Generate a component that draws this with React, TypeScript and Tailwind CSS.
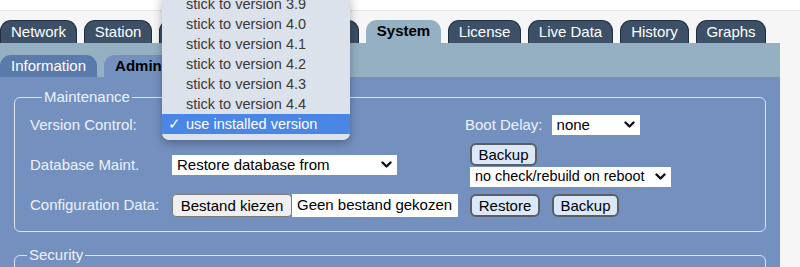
import React from 'react';

const mainTabs = [
  { label: 'Network', w: 'w-[77px]' },
  { label: 'Station', w: 'w-[68px]' },
  { label: 'Calibration', w: 'w-[97px]' },
  { label: 'Alarms', w: 'w-[96px]' },
  { label: 'System', w: 'w-[75px]', active: true },
  { label: 'License', w: 'w-[73px]' },
  { label: 'Live Data', w: 'w-[85px]' },
  { label: 'History', w: 'w-[69px]' },
  { label: 'Graphs', w: 'w-[70px]' },
];

const versions = ['3.9', '4.0', '4.1', '4.2', '4.3', '4.4'];

const Chevron = () => (
  <svg width="11" height="8" viewBox="0 0 11 8" className="shrink-0">
    <path d="M1.5 1.5 L5.5 5.5 L9.5 1.5" fill="none" stroke="#111" strokeWidth="2.4" strokeLinecap="round" strokeLinejoin="round" />
  </svg>
);

const Select = ({ text, className }: { text: string; className: string }) => (
  <div className={`flex items-center justify-between bg-white h-[20px] pl-[5px] pr-[5px] text-black ${className}`}>
    <span className="whitespace-nowrap">{text}</span>
    <Chevron />
  </div>
);

const Btn = ({ children, className = '' }: { children: React.ReactNode; className?: string }) => (
  <button className={`h-[23px] rounded-[6px] border-2 border-[#5a5f66] bg-[#dce8f8] text-black leading-none ${className}`}>
    {children}
  </button>
);

export default function App() {
  return (
    <div className="relative w-[800px] h-[267px] overflow-hidden bg-[#f6f6f6] text-[15px]" style={{ fontFamily: '"Liberation Sans", Arial, sans-serif' }}>
      <div className="h-[11px] bg-white border-b border-[#e3e3e3]" />
      <div className="w-[780px]">
        {/* main tabs */}
        <div className="flex gap-[7px] pt-[9px] items-end">
          {mainTabs.map((t) => (
            <div
              key={t.label}
              className={`${t.w} h-[23px] rounded-t-[11px] flex items-center justify-center whitespace-nowrap ${
                t.active
                  ? 'bg-[#94b0c2] text-black font-bold'
                  : 'bg-[#3c5067] text-white border border-b-0 border-[#22303f]'
              }`}
            >
              {t.label}
            </div>
          ))}
        </div>
        {/* sub tabs band */}
        <div className="h-[34px] bg-[#94b0c2] flex items-end gap-[7px]">
          <div className="w-[97px] h-[22px] rounded-t-[11px] bg-[#5a7aab] text-white flex items-center justify-center">
            Information
          </div>
          <div className="w-[128px] h-[22px] rounded-t-[11px] bg-[#7390bf] text-black font-bold flex items-center justify-center">
            Administration
          </div>
        </div>
        {/* panel */}
        <div className="bg-[#7390bf] h-[200px] pt-[11px] text-[#eef2f8]">
          <fieldset className="mx-[14px] border border-[#dbe3ef] rounded-[6px] pl-[15px] pt-[9px] pb-[14px]">
            <legend className="ml-[12px] px-[2px] leading-[18px]">Maintenance</legend>
            <div className="grid grid-cols-[142px_298px_1fr] items-center">
              <div className="h-[20px] leading-[20px]">Version Control:</div>
              <div />
              <div className="flex items-center -ml-[5px] h-[20px]">
                <span>Boot Delay:</span>
                <Select text="none" className="ml-[9px] w-[88px]" />
              </div>

              <div className="mt-[8px]">Database Maint.</div>
              <div className="mt-[8px]">
                <Select text="Restore database from" className="w-[225px]" />
              </div>
              <div className="mt-[8px] flex flex-col items-start gap-[1px]">
                <Btn className="w-[67px]">Backup</Btn>
                <Select text="no check/rebuild on reboot" className="w-[201px] text-[14.4px]" />
              </div>

              <div className="mt-[7px]">Configuration Data:</div>
              <div className="mt-[7px] flex items-center">
                <button className="h-[23px] w-[120px] rounded-[4px] border border-[#7a7a7a] bg-[#efefef] text-black">Bestand kiezen</button>
                <div className="h-[23px] w-[166px] bg-white text-black flex items-center pl-[5px] whitespace-nowrap">Geen bestand gekozen</div>
              </div>
              <div className="mt-[7px] flex gap-[12px]">
                <Btn className="w-[70px]">Restore</Btn>
                <Btn className="w-[67px]">Backup</Btn>
              </div>
            </div>
          </fieldset>
          <fieldset className="mx-[14px] mt-[14px] border border-[#dbe3ef] rounded-[6px] h-[40px]">
            <legend className="ml-[12px] px-[2px] leading-[18px]">Security</legend>
          </fieldset>
        </div>
      </div>

      {/* open version select menu */}
      <div className="absolute left-[162px] top-[-6px] w-[188px] bg-[#dce2ec] rounded-b-[7px] pb-[6px] shadow-[0_3px_10px_rgba(0,0,0,0.3)] text-[14.5px]">
        {versions.map((v) => (
          <div key={v} className="h-[20px] leading-[20px] pl-[24px] text-[#3a3a3a] whitespace-nowrap">
            stick to version {v}
          </div>
        ))}
        <div className="h-[20px] leading-[20px] pl-[6px] bg-[#4a86e6] text-white whitespace-nowrap flex items-center">
          <span className="w-[18px]">✓</span>
          <span>use installed version</span>
        </div>
      </div>
    </div>
  );
}
